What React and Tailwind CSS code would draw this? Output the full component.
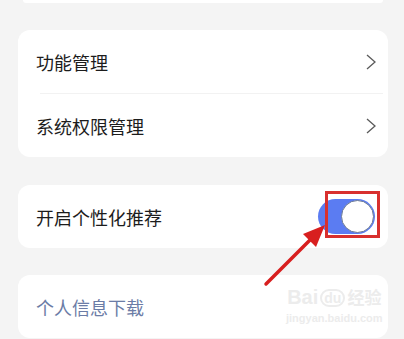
const font = { fontFamily: '"Noto Sans CJK SC", "Noto Sans", sans-serif' }

const Row = ({ label, children, className = 'text-[#1c1c1c]' }) => (
  <div className="flex h-[63px] items-center justify-between pl-[18px] pr-[10px]">
    <span className={`text-[18px] leading-none ${className}`}>{label}</span>
    {children}
  </div>
)

const Chevron = () => (
  <svg width="12" height="18" viewBox="0 0 12 18" className="mr-[1px]">
    <polyline points="2,2 10,9 2,16" fill="none" stroke="#5a5a5a" strokeWidth="1.3" strokeLinejoin="miter" />
  </svg>
)

const Toggle = () => (
  <div className="relative mr-[3px]">
    <div className="flex h-[35px] w-[57px] items-center justify-end rounded-full bg-[#5b7cf2] pr-[1px]">
      <div className="h-[33px] w-[33px] rounded-full border-[1.5px] border-[#6d7b95] bg-white" />
    </div>
    {/* red highlight box */}
    <div className="absolute left-[7px] top-[-8px] h-[47px] w-[55px] border-[3px] border-[#d8302e]" />
  </div>
)

export default function App() {
  return (
    <div className="relative h-[339px] w-[404px] overflow-hidden bg-[#f4f4f4] pl-[18px] pr-[16px]" style={font}>
      <div className="mx-[5px] h-[3px] rounded-b-[10px] bg-white" />

      <div className="mt-[27px] rounded-[12px] bg-white">
        <Row label="功能管理"><Chevron /></Row>
        <div className="ml-[22px] mr-[5px] h-px bg-[#f2f2f2]" />
        <Row label="系统权限管理"><Chevron /></Row>
      </div>

      <div className="mt-[28px] rounded-[12px] bg-white">
        <Row label="开启个性化推荐"><Toggle /></Row>
      </div>

      <div className="mt-[27px] rounded-[12px] bg-white">
        <Row label="个人信息下载" className="text-[#6b7ca6]" />
      </div>

      {/* red arrow annotation */}
      <svg className="absolute left-0 top-0" width="404" height="339" viewBox="0 0 404 339">
        <line x1="266" y1="284" x2="314" y2="236" stroke="#d81f1f" strokeWidth="3.5" strokeLinecap="round" />
        <polygon points="325,225 303,234 316,247" fill="#d81f1f" />
      </svg>

      {/* watermark */}
      <div className="pointer-events-none absolute left-[286px] top-[287px] flex flex-col items-center text-[#ececec]" style={{ fontFamily: '"Liberation Sans", "Noto Sans CJK SC", sans-serif' }}>
        <div className="flex items-end gap-[2px] leading-none">
          <span className="text-[20px] font-bold">Bai</span>
          <span className="rounded-full border-2 border-[#ececec] px-[2px] text-[14px] font-bold">du</span>
          <span className="text-[17px] font-bold">经验</span>
        </div>
        <span className="mt-[6px] text-[11px] font-bold leading-none">jingyan.baidu.com</span>
      </div>
    </div>
  )
}
